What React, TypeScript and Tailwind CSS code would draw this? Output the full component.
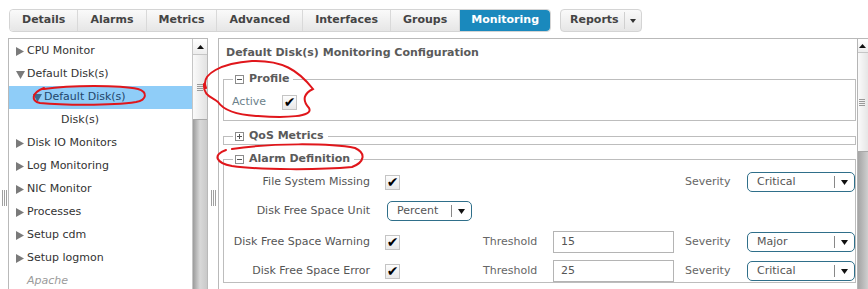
import React from 'react'

const tabs = ['Details', 'Alarms', 'Metrics', 'Advanced', 'Interfaces', 'Groups']

type TreeItem = {
  label: string
  pad: string
  arrow?: 'right' | 'down'
  selected?: boolean
  muted?: boolean
}

const treeItems: TreeItem[] = [
  { label: 'CPU Monitor', pad: 'pl-[7px]', arrow: 'right' },
  { label: 'Default Disk(s)', pad: 'pl-[7px]', arrow: 'down' },
  { label: 'Default Disk(s)', pad: 'pl-[24px]', arrow: 'down', selected: true },
  { label: 'Disk(s)', pad: 'pl-[52px]' },
  { label: 'Disk IO Monitors', pad: 'pl-[7px]', arrow: 'right' },
  { label: 'Log Monitoring', pad: 'pl-[7px]', arrow: 'right' },
  { label: 'NIC Monitor', pad: 'pl-[7px]', arrow: 'right' },
  { label: 'Processes', pad: 'pl-[7px]', arrow: 'right' },
  { label: 'Setup cdm', pad: 'pl-[7px]', arrow: 'right' },
  { label: 'Setup logmon', pad: 'pl-[7px]', arrow: 'right' },
  { label: 'Apache', pad: 'pl-[18px]', muted: true },
]

const Arrow = ({ dir, color }: { dir: 'right' | 'down'; color: string }) =>
  dir === 'right' ? (
    <svg width="8" height="9" viewBox="0 0 8 9" className="mr-[3px] shrink-0">
      <path d="M0 0 L8 4.5 L0 9 Z" fill={color} />
    </svg>
  ) : (
    <svg width="9" height="8" viewBox="0 0 9 8" className="mr-[2px] shrink-0">
      <path d="M0 0 L9 0 L4.5 8 Z" fill={color} />
    </svg>
  )

const Grip = () => (
  <div className="flex gap-[1px]">
    <div className="w-px h-[16px] bg-[#a0a0a0]" />
    <div className="w-px h-[16px] bg-[#a0a0a0]" />
    <div className="w-px h-[16px] bg-[#a0a0a0]" />
  </div>
)

const HGrip = () => (
  <div className="flex flex-col gap-[1px]">
    <div className="w-[6px] h-px bg-[#9a9a9a]" />
    <div className="w-[6px] h-px bg-[#9a9a9a]" />
    <div className="w-[6px] h-px bg-[#9a9a9a]" />
    <div className="w-[6px] h-px bg-[#9a9a9a]" />
  </div>
)

const UpArrow = () => (
  <svg width="7" height="4" viewBox="0 0 7 4">
    <path d="M0 4 L3.5 0 L7 4 Z" fill="#111" />
  </svg>
)

const Toggle = ({ open }: { open: boolean }) => (
  <svg width="9" height="9" viewBox="0 0 9 9" className="mr-[5px]">
    <rect x="0.5" y="0.5" width="8" height="8" fill="#fff" stroke="#8c8c8c" />
    <path d="M2 4.5 H7" stroke="#555" />
    {!open && <path d="M4.5 2 V7" stroke="#555" />}
  </svg>
)

const Check = () => (
  <div className="w-[15px] h-[15px] border border-[#c4c4c4] bg-gradient-to-b from-[#fdfdfd] to-[#e8e8e8] flex items-center justify-center text-[14px] leading-none text-black">
    ✔
  </div>
)

const Select = ({ value, w }: { value: string; w: string }) => (
  <div className={`${w} h-[20px] rounded-[5px] border border-[#2f6f8a] bg-white flex items-center text-[#555]`}>
    <span className="flex-1 pl-[9px]">{value}</span>
    <div className="w-px h-[12px] bg-[#888]" />
    <svg width="7" height="5" viewBox="0 0 7 5" className="mx-[6px]">
      <path d="M0 0 H7 L3.5 5 Z" fill="#111" />
    </svg>
  </div>
)

type Row = {
  label: string
  unit?: boolean
  threshold?: string
  severity?: string
  mt: string
}

const rows: Row[] = [
  { label: 'File System Missing', severity: 'Critical', mt: 'mt-0' },
  { label: 'Disk Free Space Unit', unit: true, mt: 'mt-[7px]' },
  { label: 'Disk Free Space Warning', threshold: '15', severity: 'Major', mt: 'mt-[9px]' },
  { label: 'Disk Free Space Error', threshold: '25', severity: 'Critical', mt: 'mt-[7px]' },
]

export default function App() {
  return (
    <div className="relative w-[868px] h-[289px] overflow-hidden bg-white font-['DejaVu_Sans',sans-serif] text-[11px]">
      {/* tab bar */}
      <div className="h-[38px] pt-[9px] pl-[9px] flex items-start">
        <div className="flex h-[23px] rounded-[4px] border border-[#d4d4d4]">
          {tabs.map((t, i) => (
            <div
              key={t}
              className={`px-[12px] flex items-center font-bold text-[#444] bg-gradient-to-b from-[#fafafa] to-[#e6e6e6] border-r border-[#d9d9d9] ${i === 0 ? 'rounded-l-[4px]' : ''}`}
            >
              {t}
            </div>
          ))}
          <div className="px-[11px] flex items-center font-bold text-white bg-[#1a89bd] rounded-r-[4px]">Monitoring</div>
        </div>
        <div className="ml-[9px] flex items-center h-[23px] rounded-[4px] border border-[#d4d4d4] bg-gradient-to-b from-[#fafafa] to-[#e6e6e6] font-bold text-[#444]">
          <span className="pl-[9px] pr-[5px]">Reports</span>
          <div className="w-px h-[17px] bg-[#d0d0d0]" />
          <svg width="6" height="4" viewBox="0 0 6 4" className="mx-[5px]">
            <path d="M0 0 H6 L3 4 Z" fill="#333" />
          </svg>
        </div>
      </div>

      {/* main area */}
      <div className="flex h-[251px]">
        <div className="w-[8px] pt-[152px] flex justify-center">
          <Grip />
        </div>

        {/* tree panel */}
        <div className="w-[200px] h-[260px] border border-[#b9b9b9] flex">
          <div className="flex-1 flex flex-col pt-[1px]">
            {treeItems.map((it, i) => (
              <div
                key={i}
                className={`h-[23px] shrink-0 flex items-center ${it.pad} ${it.selected ? 'bg-[#8fcdf8] text-[#23466b]' : it.muted ? 'text-[#9a9a9a] italic' : 'text-[#333]'}`}
              >
                {it.arrow && <Arrow dir={it.arrow} color={it.selected ? '#3d6a8f' : '#7a7a7a'} />}
                <span>{it.label}</span>
              </div>
            ))}
          </div>
          <div className="w-[15px] flex flex-col border-l border-[#c6c6c6]">
            <div className="h-[16px] shrink-0 flex items-center justify-center bg-gradient-to-b from-white to-[#ededed] border-b border-[#c6c6c6]">
              <UpArrow />
            </div>
            <div className="h-[65px] shrink-0 flex items-center justify-center bg-gradient-to-r from-[#fafafa] to-[#e2e2e2] border-b border-[#a8a8a8]">
              <HGrip />
            </div>
            <div className="flex-1 bg-gradient-to-r from-[#9c9c9c] via-[#d9d9d9] to-[#c9c9c9]" />
          </div>
        </div>

        <div className="w-[10px] pt-[152px] flex justify-center">
          <Grip />
        </div>

        {/* config panel */}
        <div className="w-[650px] shrink-0 h-[260px] border-t border-l border-[#b9b9b9] flex">
          <div className="flex-1 pl-[4px] pr-[1px]">
            <div className="pl-[3px] pt-[6px] leading-[15px] font-bold text-[#5a5a5a]">
              Default Disk(s) Monitoring Configuration
            </div>

            <fieldset className="mt-[11px] border border-[#bdbdbd] pb-[7px]">
              <legend className="ml-[9px] pl-[2px] pr-[4px] h-[16px] flex items-center font-bold text-[#5a5a5a]">
                <Toggle open />
                Profile
              </legend>
              <div className="pt-[4px] pl-[8px] h-[26px] flex items-center">
                <span className="w-[50px] text-[#6b7f8a]">Active</span>
                <Check />
              </div>
            </fieldset>

            <fieldset className="mt-[7px] border border-[#bdbdbd]">
              <legend className="ml-[9px] pl-[2px] pr-[4px] h-[16px] flex items-center font-bold text-[#5a5a5a]">
                <Toggle open={false} />
                QoS Metrics
              </legend>
            </fieldset>

            <fieldset className="mt-[6px] border border-[#bdbdbd] pt-[4px]">
              <legend className="ml-[9px] pl-[2px] pr-[4px] h-[16px] flex items-center font-bold text-[#5a5a5a]">
                <Toggle open />
                Alarm Definition
              </legend>
              {rows.map((r) => (
                <div key={r.label} className={`${r.mt} h-[22px] flex items-center text-[#555]`}>
                  <div className="w-[146px] text-right">{r.label}</div>
                  {r.unit ? (
                    <div className="ml-[17px]">
                      <Select value="Percent" w="w-[85px]" />
                    </div>
                  ) : (
                    <>
                      <div className="ml-[15px]">
                        <Check />
                      </div>
                      <div className="w-[83px]" />
                      <div className="w-[70px] text-[#666]">{r.threshold ? 'Threshold' : ''}</div>
                      <div className="w-[121px]">
                        {r.threshold && (
                          <div className="h-[22px] border border-[#b4b4b4] flex items-center pl-[7px] text-[#555]">
                            {r.threshold}
                          </div>
                        )}
                      </div>
                      <div className="w-[11px]" />
                      <div className="w-[62px] text-[#666]">Severity</div>
                      <Select value={r.severity || ''} w="w-[108px]" />
                    </>
                  )}
                </div>
              ))}
            </fieldset>
          </div>
          <div className="w-[11px] flex flex-col border-l border-[#b5b5b5]">
            <div className="h-[14px] shrink-0 flex items-center pl-[1px] bg-gradient-to-b from-white to-[#ededed] border-b border-[#c6c6c6]">
              <UpArrow />
            </div>
            <div className="h-[99px] shrink-0 flex items-center pl-[1px] bg-gradient-to-r from-[#fafafa] to-[#e6e6e6] border-b border-[#a8a8a8]">
              <HGrip />
            </div>
            <div className="flex-1 bg-gradient-to-r from-[#a5a5a5] to-[#cfcfcf]" />
          </div>
        </div>
      </div>

      {/* red hand-drawn annotations */}
      <svg className="absolute inset-0 pointer-events-none" width="868" height="289" viewBox="0 0 868 289">
        <g fill="none" stroke="#e0161b" strokeWidth="2" strokeLinecap="round">
          <path d="M44 89 C70 85 120 85 138 89 C148 92 147 100 136 102 C110 106 60 105 40 103 C31 101 31 93 44 88" />
          <path d="M206 88 C200 74 222 63 252 61 C282 60 298 70 313 89 C305 93 301 99 309 108 C314 117 285 118 258 116 C238 115 224 111 218 102 C212 97 203 96 204 84" />
          <path d="M232 149 C270 143 330 143 355 148 C366 153 365 162 352 167 C320 170 260 170 232 166 C216 163 212 155 226 150" />
        </g>
      </svg>
    </div>
  )
}
